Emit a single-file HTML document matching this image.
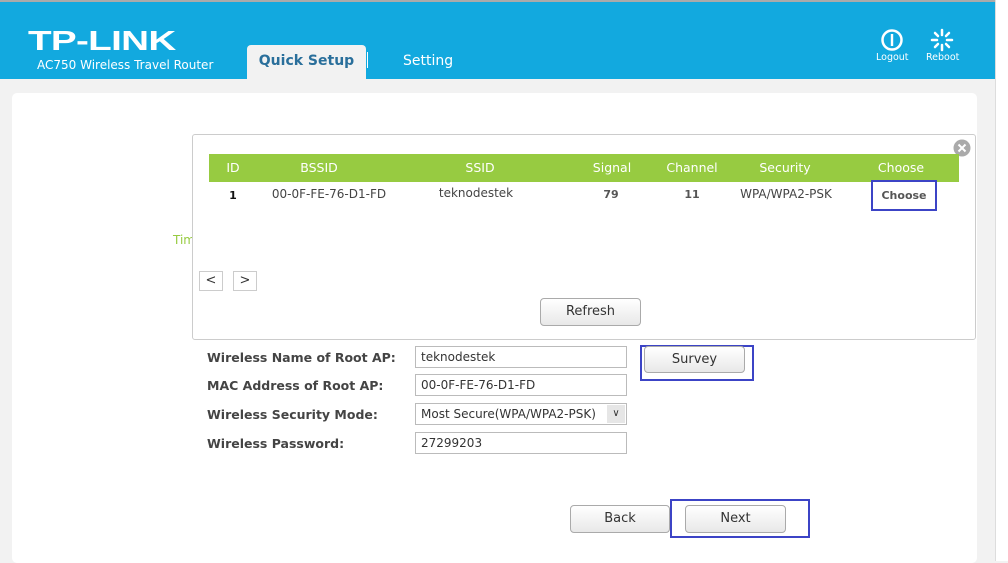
<!DOCTYPE html>
<html><head><style>
*{margin:0;padding:0;box-sizing:border-box}
body{width:1008px;height:561px;overflow:hidden;background:#f2f2f2;font-family:"DejaVu Sans","Liberation Sans",sans-serif;position:relative;color:#333}
.a{position:absolute}
.hdr{left:0;top:0;width:995px;height:79px;background:#12a9df;border-top:2px solid #aaa}
.logo{left:28px;top:25px;color:#fff;font-size:28px;font-weight:bold;font-family:"Liberation Sans",sans-serif;transform:scaleX(1.38);transform-origin:left;letter-spacing:-0.5px}
.sub{left:37px;top:58px;color:#fff;font-size:12px}
.tab{left:247px;top:45px;width:119px;height:34px;background:#f2f2f2;border-radius:4px 4px 0 0;color:#2a6f9b;font-weight:bold;font-size:14px;text-align:center;line-height:32px}
.set{left:403px;top:53px;color:#fff;font-size:14px}
.card{left:12px;top:93px;width:965px;height:470px;background:#fff;border-radius:5px}
.pop{left:192px;top:134px;width:784px;height:206px;background:#fff;border:1px solid #ccc;border-radius:3px}
.th{left:209px;top:154px;width:750px;height:28px;background:#97cb41;color:#fff;font-size:12.5px}
.th span,.tr span{position:absolute;top:6px;transform:translateX(-50%);white-space:nowrap}
.tr{left:209px;top:182px;width:750px;height:28px;font-size:12px;color:#444}
.btn{background:linear-gradient(#fff,#e8e8e8);border:1px solid #aaa;border-radius:4px;text-align:center;color:#333;font-size:13px}
.lbl{left:207px;font-size:12.5px;font-weight:bold;color:#444}
.inp{left:415px;width:212px;height:22px;border:1px solid #bbb;font-size:12px;padding:3px 5px;color:#333;white-space:nowrap}
.hl{border:2px solid #3c44c6}
</style></head><body>
<div class="a hdr"></div>
<div class="a logo">TP-LINK</div>
<div class="a sub">AC750 Wireless Travel Router</div>
<div class="a tab">Quick Setup</div>
<div class="a" style="left:367px;top:52px;width:1px;height:16px;background:#fff"></div>
<div class="a set">Setting</div>
<svg class="a" style="left:880px;top:28px" width="24" height="24" viewBox="0 0 24 24"><circle cx="12" cy="12" r="9.5" fill="none" stroke="#fff" stroke-width="2.5"/><rect x="10.8" y="6" width="2.4" height="12" fill="#fff"/></svg>
<div class="a" style="left:876px;top:52px;color:#fff;font-size:9.5px">Logout</div>
<svg class="a" style="left:930px;top:28px" width="24" height="24" viewBox="0 0 24 24" stroke="#fff" stroke-width="2.5" stroke-linecap="round"><path d="M12 2v5M12 17v5M2 12h5M17 12h5M5 5l3 3M16 16l3 3M19 5l-3 3M8 16l-3 3"/></svg>
<div class="a" style="left:926px;top:52px;color:#fff;font-size:9.5px">Reboot</div>
<div class="a" style="left:995px;top:0;width:13px;height:561px;background:#fff;border-left:1px solid #ddd"></div>
<div class="a card"></div>
<div class="a" style="left:173px;top:233px;color:#97cb41;font-size:12px">Tim</div>
<div class="a pop"></div>
<svg class="a" style="left:953px;top:139px" width="18" height="18" viewBox="0 0 18 18"><circle cx="9" cy="9" r="8.5" fill="#aaa"/><path d="M5.5 5.5l7 7M12.5 5.5l-7 7" stroke="#fff" stroke-width="2"/></svg>
<div class="a th"><span style="left:24px">ID</span><span style="left:110px">BSSID</span><span style="left:271px">SSID</span><span style="left:403px">Signal</span><span style="left:483px">Channel</span><span style="left:576px">Security</span><span style="left:692px">Choose</span></div>
<div class="a tr"><span style="left:24px;top:7px;font-weight:bold;color:#111;font-size:11px">1</span><span style="left:120px;top:5px">00-0F-FE-76-D1-FD</span><span style="left:267px;top:4px">teknodestek</span><span style="left:402px;top:6px;font-size:11px;font-weight:bold;color:#555">79</span><span style="left:483px;top:6px;font-size:11px;font-weight:bold;color:#555">11</span><span style="left:577px;top:5px">WPA/WPA2-PSK</span></div>
<div class="a hl" style="left:871px;top:180px;width:66px;height:31px;font-size:11px;font-weight:bold;color:#555;text-align:center;line-height:27px">Choose</div>
<div class="a" style="left:199px;top:271px;width:24px;height:20px;border:1px solid #ccc;font-size:13px;text-align:center;line-height:18px">&lt;</div>
<div class="a" style="left:233px;top:271px;width:24px;height:20px;border:1px solid #ccc;font-size:13px;text-align:center;line-height:18px">&gt;</div>
<div class="a btn" style="left:540px;top:298px;width:101px;height:28px;line-height:26px">Refresh</div>
<div class="a lbl" style="top:350px">Wireless Name of Root AP:</div>
<div class="a lbl" style="top:378px">MAC Address of Root AP:</div>
<div class="a lbl" style="top:407px">Wireless Security Mode:</div>
<div class="a lbl" style="top:436px">Wireless Password:</div>
<div class="a inp" style="top:346px">teknodestek</div>
<div class="a inp" style="top:374px">00-0F-FE-76-D1-FD</div>
<div class="a inp" style="top:403px;padding-top:3px;overflow:hidden">Most Secure(WPA/WPA2-PSK)<span style="position:absolute;right:1px;top:1px;width:18px;height:18px;background:#e6e6e6;text-align:center;font-size:10px;line-height:18px">&#8744;</span></div>
<div class="a inp" style="top:432px">27299203</div>
<div class="a hl" style="left:640px;top:345px;width:114px;height:36px"></div>
<div class="a btn" style="left:644px;top:346px;width:101px;height:27px;line-height:25px">Survey</div>
<div class="a btn" style="left:570px;top:505px;width:100px;height:28px;line-height:26px">Back</div>
<div class="a hl" style="left:670px;top:499px;width:140px;height:39px"></div>
<div class="a btn" style="left:685px;top:505px;width:101px;height:28px;line-height:26px">Next</div>
</body></html>
